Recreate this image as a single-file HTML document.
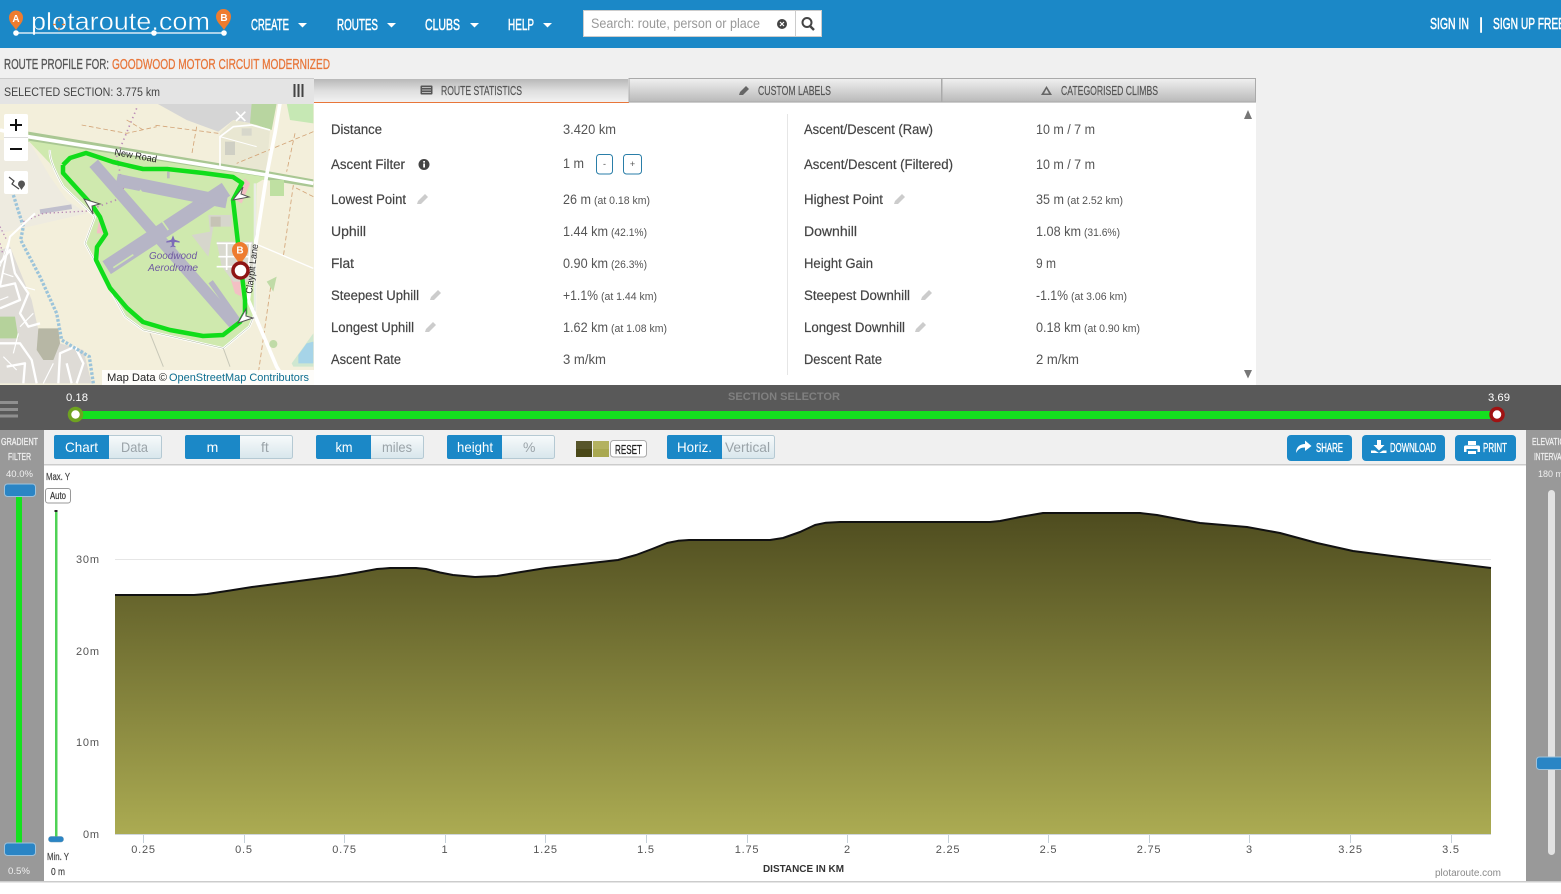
<!DOCTYPE html>
<html><head><meta charset="utf-8"><title>plotaroute.com</title>
<style>
html,body{margin:0;padding:0;background:#fff;overflow:hidden}
svg{display:block;font-family:"Liberation Sans",sans-serif}
.n{font-family:"Liberation Sans Narrow","Liberation Sans",sans-serif}
.l{font-size:13.5px;fill:#444;stroke:#444;stroke-width:.2px}
.v{font-size:13.5px;fill:#555}
.s{font-size:11px;fill:#555}
.t{font-size:14px;fill:#fff;text-anchor:middle}
.o{font-size:14px;fill:#9aa3a8}
.ax{font-size:11px;fill:#555;letter-spacing:.8px}
.xl{font-size:11px;fill:#555;letter-spacing:.8px;text-anchor:middle}
</style></head><body>
<svg width="1561" height="894" viewBox="0 0 1561 894" xmlns="http://www.w3.org/2000/svg">
<defs>
<linearGradient id="fill" x1="0" y1="513" x2="0" y2="834" gradientUnits="userSpaceOnUse"><stop offset="0" stop-color="#4e4c1f"/><stop offset="1" stop-color="#abab52"/></linearGradient>
<linearGradient id="tabg" x1="0" y1="0" x2="0" y2="1"><stop offset="0" stop-color="#b8b8b8"/><stop offset=".5" stop-color="#dedede"/><stop offset="1" stop-color="#f2f2f2"/></linearGradient>
<linearGradient id="tabh" x1="0" y1="0" x2="0" y2="1"><stop offset="0" stop-color="#f0f0f0"/><stop offset="1" stop-color="#b9b9b9"/></linearGradient>
<linearGradient id="off" x1="0" y1="0" x2="0" y2="1"><stop offset="0" stop-color="#f7fafb"/><stop offset="1" stop-color="#d8e6ec"/></linearGradient>
<clipPath id="mc"><rect x="0" y="104" width="314" height="281"/></clipPath>
<clipPath id="rc"><rect x="1526" y="430" width="35" height="451"/></clipPath>
</defs>
<rect width="1561" height="894" fill="#fff"/>

<!-- top bar -->
<rect width="1561" height="48" fill="#1b88c7"/>
<text x="31" y="30" font-size="25" fill="#fff" stroke="#1b88c7" stroke-width=".4" textLength="179" lengthAdjust="spacingAndGlyphs">plotaroute.com</text>
<path d="M16 33H224" stroke="#fff" stroke-width="1.200"/>
<circle cx="16" cy="33" r="2.800" fill="#fff"/><circle cx="154" cy="33" r="2.800" fill="#fff"/><circle cx="224" cy="33" r="2.800" fill="#fff"/>
<path d="M16 30C13 25 9 23 9 17.500A7 7 0 0 1 23 17.500C23 23 19 25 16 30Z" fill="#ee7c2f"/>
<path d="M224 30C221 25 216 22 216 16.500A7.500 7.500 0 0 1 231 16.500C231 22 227 25 224 30Z" fill="#ee7c2f"/>
<text x="16" y="22" font-size="10" font-weight="bold" fill="#fff" text-anchor="middle">A</text>
<text x="224" y="21" font-size="10" font-weight="bold" fill="#fff" text-anchor="middle">B</text>
<path d="M59 18.500V21.500M59 27.500V30.500M53 24.500H56M62 24.500H65" stroke="#ee7c2f" stroke-width="1.200"/>
<g class="n" font-size="16" fill="#fff" stroke="#fff" stroke-width=".5">
<text x="251" y="30" textLength="38" lengthAdjust="spacingAndGlyphs">CREATE</text>
<text x="337" y="30" textLength="41" lengthAdjust="spacingAndGlyphs">ROUTES</text>
<text x="425" y="30" textLength="35" lengthAdjust="spacingAndGlyphs">CLUBS</text>
<text x="508" y="30" textLength="26" lengthAdjust="spacingAndGlyphs">HELP</text>
<text x="1430" y="29" textLength="39" lengthAdjust="spacingAndGlyphs">SIGN IN</text>
<text x="1479" y="29">|</text>
<text x="1493" y="29" textLength="72" lengthAdjust="spacingAndGlyphs">SIGN UP FREE</text>
</g>
<g fill="#fff"><path d="M298 23h9l-4.500 4.500z"/><path d="M387 23h9l-4.500 4.500z"/><path d="M470 23h9l-4.500 4.500z"/><path d="M543 23h9l-4.500 4.500z"/></g>
<rect x="583.500" y="10.500" width="238" height="26" fill="#fff" stroke="#ccc"/>
<path d="M795.500 10V37" stroke="#ccc"/>
<text x="591" y="28" font-size="13.500" fill="#999" textLength="169" lengthAdjust="spacingAndGlyphs">Search: route, person or place</text>
<circle cx="782" cy="24" r="5" fill="#444"/><path d="M780 22l4 4M784 22l-4 4" stroke="#fff" stroke-width="1.200"/>
<circle cx="807" cy="22.500" r="4.500" fill="none" stroke="#444" stroke-width="2"/><path d="M810 26l4 4" stroke="#444" stroke-width="2.400"/>

<!-- title row -->
<rect y="48" width="1561" height="337" fill="#f0f0f0"/>
<g class="n" font-size="15">
<text x="4" y="69" fill="#555" stroke="#555" stroke-width=".3" textLength="105" lengthAdjust="spacingAndGlyphs">ROUTE PROFILE FOR:</text>
<text x="112" y="69" fill="#e8763a" stroke="#e8763a" stroke-width=".3" textLength="218" lengthAdjust="spacingAndGlyphs">GOODWOOD MOTOR CIRCUIT MODERNIZED</text>
</g>
<rect y="78" width="314" height="1" fill="#ccc"/>
<rect y="79" width="314" height="25" fill="#e4e4e4"/>
<text x="4" y="96" font-size="11.500" fill="#444" textLength="156" lengthAdjust="spacingAndGlyphs">SELECTED SECTION: 3.775 km</text>
<path d="M294.500 84V97M298.500 84V97M302.500 84V97" stroke="#444" stroke-width="2"/>

<!-- tabs -->
<rect x="314" y="79" width="314" height="23" fill="url(#tabg)"/>
<rect x="314" y="102" width="315" height="1" fill="#e8763a"/>
<rect x="629" y="78.500" width="312.500" height="23.500" fill="url(#tabh)" stroke="#aaa"/>
<rect x="942" y="78.500" width="313.500" height="23.500" fill="url(#tabh)" stroke="#aaa"/>
<rect x="314" y="103" width="942" height="282" fill="#fff"/>
<g class="n" font-size="13" fill="#555" stroke="#555" stroke-width=".2">
<text x="441" y="95" textLength="81" lengthAdjust="spacingAndGlyphs">ROUTE STATISTICS</text>
<text x="758" y="95" textLength="73" lengthAdjust="spacingAndGlyphs">CUSTOM LABELS</text>
<text x="1061" y="95" textLength="97" lengthAdjust="spacingAndGlyphs">CATEGORISED CLIMBS</text>
</g>
<rect x="420.500" y="85.500" width="12" height="9" rx="1" fill="#555"/><path d="M422 87.500h9M422 90h9M422 92.500h9" stroke="#ddd" stroke-width=".8"/>
<path d="M739 95l1-3 6-6 3 3-6 6z" fill="#666"/>
<path d="M1046.500 86l5.500 9h-11zM1046.500 89l-2.500 4.500h5z" fill="#666" fill-rule="evenodd"/>

<!-- stats -->
<path d="M787.500 114V375" stroke="#e6e6e6"/>
<g class="l">
<text x="331" y="134" textLength="51" lengthAdjust="spacingAndGlyphs">Distance</text>
<text x="331" y="169" textLength="74" lengthAdjust="spacingAndGlyphs">Ascent Filter</text>
<text x="331" y="204" textLength="75" lengthAdjust="spacingAndGlyphs">Lowest Point</text>
<text x="331" y="236" textLength="35" lengthAdjust="spacingAndGlyphs">Uphill</text>
<text x="331" y="268" textLength="23" lengthAdjust="spacingAndGlyphs">Flat</text>
<text x="331" y="300" textLength="88" lengthAdjust="spacingAndGlyphs">Steepest Uphill</text>
<text x="331" y="332" textLength="83" lengthAdjust="spacingAndGlyphs">Longest Uphill</text>
<text x="331" y="364" textLength="70" lengthAdjust="spacingAndGlyphs">Ascent Rate</text>
<text x="804" y="134" textLength="129" lengthAdjust="spacingAndGlyphs">Ascent/Descent (Raw)</text>
<text x="804" y="169" textLength="149" lengthAdjust="spacingAndGlyphs">Ascent/Descent (Filtered)</text>
<text x="804" y="204" textLength="79" lengthAdjust="spacingAndGlyphs">Highest Point</text>
<text x="804" y="236" textLength="53" lengthAdjust="spacingAndGlyphs">Downhill</text>
<text x="804" y="268" textLength="69" lengthAdjust="spacingAndGlyphs">Height Gain</text>
<text x="804" y="300" textLength="106" lengthAdjust="spacingAndGlyphs">Steepest Downhill</text>
<text x="804" y="332" textLength="101" lengthAdjust="spacingAndGlyphs">Longest Downhill</text>
<text x="804" y="364" textLength="78" lengthAdjust="spacingAndGlyphs">Descent Rate</text>
</g>
<g class="v">
<text x="563" y="134" textLength="53" lengthAdjust="spacingAndGlyphs">3.420 km</text>
<text x="563" y="168" textLength="21" lengthAdjust="spacingAndGlyphs">1 m</text>
<text x="563" y="204" textLength="28" lengthAdjust="spacingAndGlyphs">26 m</text>
<text x="563" y="236" textLength="45" lengthAdjust="spacingAndGlyphs">1.44 km</text>
<text x="563" y="268" textLength="45" lengthAdjust="spacingAndGlyphs">0.90 km</text>
<text x="563" y="300" textLength="35" lengthAdjust="spacingAndGlyphs">+1.1%</text>
<text x="563" y="332" textLength="45" lengthAdjust="spacingAndGlyphs">1.62 km</text>
<text x="563" y="364" textLength="43" lengthAdjust="spacingAndGlyphs">3 m/km</text>
<text x="1036" y="134" textLength="59" lengthAdjust="spacingAndGlyphs">10 m / 7 m</text>
<text x="1036" y="169" textLength="59" lengthAdjust="spacingAndGlyphs">10 m / 7 m</text>
<text x="1036" y="204" textLength="28" lengthAdjust="spacingAndGlyphs">35 m</text>
<text x="1036" y="236" textLength="45" lengthAdjust="spacingAndGlyphs">1.08 km</text>
<text x="1036" y="268" textLength="20" lengthAdjust="spacingAndGlyphs">9 m</text>
<text x="1036" y="300" textLength="32" lengthAdjust="spacingAndGlyphs">-1.1%</text>
<text x="1036" y="332" textLength="45" lengthAdjust="spacingAndGlyphs">0.18 km</text>
<text x="1036" y="364" textLength="43" lengthAdjust="spacingAndGlyphs">2 m/km</text>
</g>
<g class="s">
<text x="594" y="204" textLength="56" lengthAdjust="spacingAndGlyphs">(at 0.18 km)</text>
<text x="611" y="236" textLength="36" lengthAdjust="spacingAndGlyphs">(42.1%)</text>
<text x="611" y="268" textLength="36" lengthAdjust="spacingAndGlyphs">(26.3%)</text>
<text x="601" y="300" textLength="56" lengthAdjust="spacingAndGlyphs">(at 1.44 km)</text>
<text x="611" y="332" textLength="56" lengthAdjust="spacingAndGlyphs">(at 1.08 km)</text>
<text x="1067" y="204" textLength="56" lengthAdjust="spacingAndGlyphs">(at 2.52 km)</text>
<text x="1084" y="236" textLength="36" lengthAdjust="spacingAndGlyphs">(31.6%)</text>
<text x="1071" y="300" textLength="56" lengthAdjust="spacingAndGlyphs">(at 3.06 km)</text>
<text x="1084" y="332" textLength="56" lengthAdjust="spacingAndGlyphs">(at 0.90 km)</text>
</g>
<circle cx="424" cy="164.500" r="5.500" fill="#444"/><rect x="423.200" y="163.500" width="1.800" height="4" fill="#fff"/><rect x="423.200" y="161" width="1.800" height="1.600" fill="#fff"/>
<rect x="596.500" y="154.500" width="16" height="19.500" rx="3" fill="#fff" stroke="#2a7ea8"/><rect x="623.500" y="154.500" width="18" height="19.500" rx="3" fill="#fff" stroke="#2a7ea8"/>
<text x="604.500" y="167" font-size="9" fill="#555" text-anchor="middle">-</text><text x="632.500" y="167" font-size="9" fill="#555" text-anchor="middle">+</text>
<g fill="#ccc">
<path d="M417 204l1-3 7-7 3 3-7 7z"/><path d="M894 204l1-3 7-7 3 3-7 7z"/>
<path d="M430 300l1-3 7-7 3 3-7 7z"/><path d="M921 300l1-3 7-7 3 3-7 7z"/>
<path d="M425 332l1-3 7-7 3 3-7 7z"/><path d="M915 332l1-3 7-7 3 3-7 7z"/>
</g>
<path d="M1244 119l4-9 4 9zM1244 370l4 8.500 4-8.500z" fill="#777"/>

<!-- map -->
<g clip-path="url(#mc)">
<rect y="104" width="314" height="281" fill="#f3efdb"/>
<g transform="translate(0,100) scale(.33333)">
<path d="M0 120H85L150 230L200 300L260 340L0 400Z" fill="#eeebe0"/>
<path d="M470 10H755V70L700 60L655 95L560 60Z" fill="#d5d5d5"/>
<path d="M755 10H830L815 90L750 70Z" fill="#b8d5a0"/><path d="M860 10H940V70L870 60Z" fill="#c6e8b4"/>
<path d="M660 100L700 60L770 75L810 90L800 210L700 205L660 190Z" fill="#e9e7d2"/>
<path d="M85 95L800 213L940 238V262L800 240L85 125Z" fill="#a9c793"/>
<path d="M85 122L800 232L770 250L765 640L748 680L670 745L430 690L375 650L255 430L285 350L190 260L150 190Z" fill="#cfe9ae"/>
<path d="M150 150Q145 180 190 260L285 350L255 430L375 650L430 690L670 745L748 680L765 640V250" fill="none" stroke="#fff" stroke-width="7"/>
<path d="M150 150Q145 180 190 260L285 350L255 430L375 650L430 690L670 745L748 680L765 640V250" fill="none" stroke="#a9b49a" stroke-width="1.500"/>
<path d="M0 450L30 440L95 600L115 690L175 690L180 730L250 750L275 850H0Z" fill="#dedbd6"/>
<path d="M115 685H175L180 730L160 780L130 780L110 750Z" fill="#b7b7a5"/>
<path d="M0 650H45L55 715H0Z" fill="#b5d29b"/>
<g fill="none" stroke="#fff" stroke-width="7" stroke-linejoin="round">
<path d="M0 490L30 450L45 520L85 580L60 640L85 680L120 670"/>
<path d="M0 560L45 550L60 600L0 625"/>
<path d="M0 730L60 730L95 780L110 850"/>
<path d="M20 800L75 790L70 850"/>
<path d="M175 850L180 760L225 740L250 790L230 850"/>
<path d="M200 790L215 850"/>
</g>
<g fill="none" stroke="#fff" stroke-width="3.500">
<path d="M10 520L40 530M70 560L105 570M60 680L100 640M10 770L50 810M130 850L160 790"/>
<path d="M0 600L25 590M40 760L55 700"/>
</g>
<path d="M40 285L70 380L62 420L120 530L170 640L185 720L268 770L280 850" fill="none" stroke="#9cc4da" stroke-width="10" stroke-dasharray="8 5"/>
<path d="M120 335L215 320" fill="none" stroke="#c0bfcd" stroke-width="14"/>
<path d="M70 365L130 340L265 333" fill="none" stroke="#b98ab5" stroke-width="4" stroke-dasharray="4 8"/>
<path d="M410 25L350 170L375 290L280 325" fill="none" stroke="#b98ab5" stroke-width="5" stroke-dasharray="4 10"/>
<path d="M0 380L20 420M0 430L8 460" fill="none" stroke="#b98ab5" stroke-width="4" stroke-dasharray="4 8"/>
<g fill="none" stroke="#d3a477" stroke-width="2.500" stroke-dasharray="14 8">
<path d="M245 75L380 100L470 80M380 60L430 90M590 80L575 165M655 100L460 75"/>
<path d="M885 100L860 215M940 95L710 190"/>
<path d="M880 255L850 470M815 540L775 820M940 290L880 260"/>
</g>
<path d="M0 90L85 110L800 225L940 250" fill="none" stroke="#fff" stroke-width="11"/>
<path d="M840 10L825 100L800 225L760 480L745 600L830 800L860 850" fill="none" stroke="#fff" stroke-width="11"/>
<path d="M775 435L940 505" fill="none" stroke="#fff" stroke-width="4"/>
<path d="M0 560L30 410L105 340" fill="none" stroke="#fff" stroke-width="6"/>
<path d="M0 500L30 410" fill="none" stroke="#fff" stroke-width="3"/>
<path d="M660 200V110L700 80L755 75L810 90" fill="none" stroke="#fff" stroke-width="5"/>
<path d="M660 110L770 140" fill="none" stroke="#fff" stroke-width="3"/>
<rect x="675" y="125" width="30" height="40" fill="#cfcfc4"/><rect x="725" y="85" width="30" height="22" fill="#d7d7cb"/>
<path d="M708 35l28 28M736 35l-28 28" stroke="#fff" stroke-width="5"/>
<path d="M810 240h42v48h-42z" fill="#bfe0a2"/>
<path d="M800 545L830 530L820 575ZM820 720a12 12 0 1 0 .1 0Z" fill="#c0dba7"/>
<path d="M875 790L940 700V800H880Z" fill="#cfe7d0"/>
<path d="M895 765L920 730L940 725V790H895Z" fill="#a6d4e8"/>
<path d="M450 700L490 800M670 745L690 800" fill="none" stroke="#c8c8b8" stroke-width="3"/>
<path d="M735 235L750 250L725 310L708 300ZM290 400L300 345L312 400ZM285 440L295 420L300 470ZM690 530L720 545L725 590L705 580Z" fill="#f3c0c4"/>
<path d="M625 345H695V380H640L625 470L575 405L630 395Z" fill="#d6d6cc"/>
<path d="M650 425H760V545H700L665 500Z" fill="#d9d9cf"/>
<path d="M650 430H755M655 470H750M650 500H720M680 430V510M720 430V500M750 430L745 520" fill="none" stroke="#fff" stroke-width="5"/>
<rect x="632" y="350" width="30" height="30" fill="#c6c3b5"/>
<path d="M505 215v20" stroke="#bbb" stroke-width="8"/>
<g fill="none" stroke="#b6b5c6" stroke-linecap="butt">
<path d="M281 190L702 672" stroke-width="34"/>
<path d="M320 503L678 268" stroke-width="46"/>
<path d="M350 240L680 306" stroke-width="38"/>
<path d="M632 545L722 672" stroke-width="16"/>
</g>
<path d="M340 503L400 464" stroke="#cfe9ae" stroke-width="5"/>
<path d="M420 270L505 390M430 290L560 305" fill="none" stroke="#cfe9ae" stroke-width="5"/>
<path d="M519 406l5 13 15 5v4l-15-2-2 10 5 4v2l-8-2-8 2v-2l5-4-2-10-15 2v-4l15-5z" fill="#7d6cb8"/>
</g>
<text x="173" y="259" font-size="10" font-style="italic" fill="#6f5aa0" text-anchor="middle" textLength="48" lengthAdjust="spacingAndGlyphs">Goodwood</text>
<text x="173" y="271" font-size="10" font-style="italic" fill="#6f5aa0" text-anchor="middle" textLength="50" lengthAdjust="spacingAndGlyphs">Aerodrome</text>
<text x="114" y="155" font-size="9.500" fill="#222" transform="rotate(10 114 155)" textLength="43" lengthAdjust="spacingAndGlyphs">New Road</text>
<text x="252" y="294" font-size="9.500" fill="#222" transform="rotate(-83 252 294)" textLength="50" lengthAdjust="spacingAndGlyphs">Claypit Lane</text>
<polyline points="63,165 70,158 86,153 113,162 143,169 167,169 203,173 233,177 242,183 233,200 238,243 245,300 245,313 240,322 223,335 203,336 170,330 143,322 127,308 110,288 96,260 97,247 106,234 100,217 92,205 63,173 63,165" fill="none" stroke="#10dd1a" stroke-width="4.500" stroke-linejoin="round"/>
<path d="M84 199L100 204L92 206L93 214Z" fill="#fff" stroke="#555" stroke-width="1"/>
<path d="M233 200L249 197L241 194L243 187Z" fill="#fff" stroke="#555" stroke-width="1"/>
<path d="M238 323L253 318L246 316L246 309Z" fill="#fff" stroke="#555" stroke-width="1"/>
<path d="M240 265C237 259 232 256 232 250A8 8 0 0 1 248 250C248 256 243 259 240 265Z" fill="#ee7c2f"/>
<text x="240" y="253.500" font-size="10" font-weight="bold" fill="#fff" text-anchor="middle">B</text>
<circle cx="240.500" cy="270.500" r="7.500" fill="#fff" stroke="#8f1414" stroke-width="3.500"/>
<rect x="4" y="114" width="24" height="47" rx="2" fill="#fff"/><path d="M4 137.500H28" stroke="#ddd"/>
<path d="M16 119V131M10 125H22M10 149H22" stroke="#111" stroke-width="2"/>
<rect x="4" y="171" width="24" height="23" rx="2" fill="#fff"/>
<path d="M9 177L14 181L12 184L19 189" fill="none" stroke="#444" stroke-width="1.200"/>
<path d="M21.500 190C20 187 18 186 18 184A3.500 3.500 0 0 1 25 184C25 186 23 187 21.500 190Z" fill="#555"/>
<rect x="102" y="370" width="212" height="15" fill="#fff" fill-opacity=".85"/>
<text x="107" y="381" font-size="11" fill="#222" textLength="60" lengthAdjust="spacingAndGlyphs">Map Data ©</text>
<text x="169" y="381" font-size="11" fill="#0d6d8f" textLength="140" lengthAdjust="spacingAndGlyphs">OpenStreetMap Contributors</text>
</g>

<!-- section selector -->
<rect y="385" width="1561" height="45" fill="#595959"/>
<path d="M0 402.500H18M0 409.500H18M0 416H18" stroke="#8f8f8f" stroke-width="3"/>
<text x="784" y="400" font-size="11" font-weight="bold" fill="#808080" text-anchor="middle" textLength="112" lengthAdjust="spacingAndGlyphs">SECTION SELECTOR</text>
<text x="66" y="401" font-size="11" fill="#fff" textLength="22" lengthAdjust="spacingAndGlyphs">0.18</text>
<text x="1488" y="401" font-size="11" fill="#fff" textLength="22" lengthAdjust="spacingAndGlyphs">3.69</text>
<rect x="80" y="411" width="1417" height="8" fill="#15e01f"/>
<circle cx="75.500" cy="414.500" r="6" fill="#fff" stroke="#6ea320" stroke-width="3.500"/>
<circle cx="1497" cy="414.500" r="6" fill="#fff" stroke="#a01212" stroke-width="3.500"/>

<!-- toolbar -->
<rect y="430" width="1561" height="34" fill="#f0f0f0"/>
<rect y="464" width="1561" height="1.500" fill="#ccc"/>
<g stroke="#b5c9d3" fill="url(#off)">
<rect x="100" y="435.500" width="61.500" height="23" rx="2"/>
<rect x="230" y="435.500" width="62.500" height="23" rx="2"/>
<rect x="361" y="435.500" width="62.500" height="23" rx="2"/>
<rect x="492" y="435.500" width="62.500" height="23" rx="2"/>
<rect x="712" y="435.500" width="62.500" height="23" rx="2"/>
</g>
<g fill="#1b88c7">
<path d="M56 435H109V459H56a2 2 0 0 1-2-2V437a2 2 0 0 1 2-2Z"/>
<path d="M187 435H240V459H187a2 2 0 0 1-2-2V437a2 2 0 0 1 2-2Z"/>
<path d="M318 435H371V459H318a2 2 0 0 1-2-2V437a2 2 0 0 1 2-2Z"/>
<path d="M449 435H502V459H449a2 2 0 0 1-2-2V437a2 2 0 0 1 2-2Z"/>
<path d="M669 435H722V459H669a2 2 0 0 1-2-2V437a2 2 0 0 1 2-2Z"/>
</g>
<text class="t" x="81.500" y="452" textLength="33" lengthAdjust="spacingAndGlyphs">Chart</text>
<text class="o" x="121" y="452" textLength="27" lengthAdjust="spacingAndGlyphs">Data</text>
<text class="t" x="212.500" y="452">m</text>
<text class="o" x="261" y="452">ft</text>
<text class="t" x="344" y="452" textLength="17" lengthAdjust="spacingAndGlyphs">km</text>
<text class="o" x="382" y="452" textLength="30" lengthAdjust="spacingAndGlyphs">miles</text>
<text class="t" x="475" y="452" textLength="36" lengthAdjust="spacingAndGlyphs">height</text>
<text class="o" x="523" y="452">%</text>
<text class="t" x="694.500" y="452" textLength="35" lengthAdjust="spacingAndGlyphs">Horiz.</text>
<text class="o" x="725" y="452" textLength="45" lengthAdjust="spacingAndGlyphs">Vertical</text>
<rect x="576" y="441" width="16" height="16" fill="#57552a"/><rect x="576" y="449" width="16" height="8" fill="#4a4818"/>
<rect x="593" y="441" width="16" height="16" fill="#b3b15f"/><rect x="593" y="449" width="16" height="8" fill="#a9a850"/>
<rect x="610.500" y="440.500" width="36" height="16.500" rx="3" fill="#fff" stroke="#aaa"/>
<text class="n" x="615" y="454" font-size="13" fill="#222" stroke="#222" stroke-width=".25" textLength="27" lengthAdjust="spacingAndGlyphs">RESET</text>
<rect x="1287" y="435" width="65" height="26" rx="4" fill="#1b88c7"/>
<rect x="1362" y="435" width="83" height="26" rx="4" fill="#1b88c7"/>
<rect x="1455" y="435" width="61" height="26" rx="4" fill="#1b88c7"/>
<g class="n" font-size="13" fill="#fff" stroke="#fff" stroke-width=".35">
<text x="1316" y="452" textLength="27" lengthAdjust="spacingAndGlyphs">SHARE</text>
<text x="1390" y="452" textLength="46" lengthAdjust="spacingAndGlyphs">DOWNLOAD</text>
<text x="1483" y="452" textLength="24" lengthAdjust="spacingAndGlyphs">PRINT</text>
</g>
<path d="M1296 453C1296 447 1300 444 1305 444V440.500L1311.500 446L1305 451V447.500C1301 447.500 1298 449 1296 453Z" fill="#fff"/>
<path d="M1377 440h4v5h3.500l-5.500 5.500-5.500-5.500h3.500zM1371 450.500h4l4 2.500 4-2.500h3.500v2.500h-15.500z" fill="#fff"/>
<path d="M1468 441h8v4h-8zM1465.500 445.500h13a1.500 1.500 0 0 1 1.500 1.500v5h-2.500v-3h-11v3H1464v-5a1.500 1.500 0 0 1 1.500-1.500zM1468 451h8v3h-8z" fill="#fff"/>

<!-- left panel -->
<rect y="430" width="44" height="451" fill="#999"/>
<g class="n" font-size="10.500" fill="#f0f0f0" stroke="#f0f0f0" stroke-width=".3">
<text x="1" y="445" textLength="37" lengthAdjust="spacingAndGlyphs">GRADIENT</text>
<text x="8" y="460" textLength="23" lengthAdjust="spacingAndGlyphs">FILTER</text>
</g>
<text x="6" y="477" font-size="9.500" fill="#f0f0f0" textLength="27" lengthAdjust="spacingAndGlyphs">40.0%</text>
<text x="8" y="874" font-size="9.500" fill="#f0f0f0" textLength="22" lengthAdjust="spacingAndGlyphs">0.5%</text>
<rect x="16" y="496" width="6" height="347" fill="#15e01f"/>
<rect x="4.500" y="484" width="31" height="12.500" rx="3" fill="#2a85c5" stroke="#9ec2dc"/>
<rect x="4.500" y="843" width="31" height="12.500" rx="3" fill="#2a85c5" stroke="#9ec2dc"/>

<!-- y slider column -->
<g class="n" font-size="10" fill="#444" stroke="#444" stroke-width=".2">
<text x="46" y="480" textLength="24" lengthAdjust="spacingAndGlyphs">Max. Y</text>
<text x="47" y="860" textLength="22" lengthAdjust="spacingAndGlyphs">Min. Y</text>
<text x="51" y="875" textLength="14" lengthAdjust="spacingAndGlyphs">0 m</text>
</g>
<rect x="45.500" y="488.500" width="25" height="14.500" rx="2.500" fill="#fff" stroke="#999"/>
<text class="n" x="50" y="499" font-size="10" fill="#333" stroke="#333" stroke-width=".2" textLength="16" lengthAdjust="spacingAndGlyphs">Auto</text>
<rect x="54.500" y="510" width="3" height="2" fill="#222"/>
<rect x="55" y="512" width="2.500" height="325" fill="#4fd255"/>
<rect x="48.500" y="836.500" width="15" height="5.500" rx="2.500" fill="#2a85c5" stroke="#5f8fb0" stroke-width=".5"/>

<!-- chart -->
<path d="M115 559.500H1491" stroke="#e6e6e6"/>
<polygon fill="url(#fill)" points="115,834 115,595 194,595 207,594 230,590.500 252,587 295,581.500 337,576 358,572.500 377,569 390,568 404,568 416,568 426,569 440,572.500 453,575 475,577 497,576 521,572 546,568 582,564 618,560 636,555 652,549 667,543 678,540.800 689,540 770,540 783,538 800,532 815,525 826,522.700 840,522 990,522 1000,521 1020,517 1043,513 1140,513 1157,515 1178,519 1200,523 1247,527 1280,533 1317,543 1353,551 1400,557 1491,568 1491,834"/>
<polyline fill="none" stroke="#111" stroke-width="2" stroke-linejoin="round" points="115,595 194,595 207,594 230,590.500 252,587 295,581.500 337,576 358,572.500 377,569 390,568 404,568 416,568 426,569 440,572.500 453,575 475,577 497,576 521,572 546,568 582,564 618,560 636,555 652,549 667,543 678,540.800 689,540 770,540 783,538 800,532 815,525 826,522.700 840,522 990,522 1000,521 1020,517 1043,513 1140,513 1157,515 1178,519 1200,523 1247,527 1280,533 1317,543 1353,551 1400,557 1491,568"/>
<path d="M115 834.500H1491" stroke="#cfd6dc"/>
<path d="M143.500 835V843M244.500 835V843M344.500 835V843M445.500 835V843M545.500 835V843M646.500 835V843M747.500 835V843M847.500 835V843M948.500 835V843M1048.500 835V843M1149.500 835V843M1249.500 835V843M1350.500 835V843M1451.500 835V843" stroke="#c5d0d8"/>
<text class="ax" x="76" y="563">30m</text><text class="ax" x="76" y="655">20m</text><text class="ax" x="76" y="746">10m</text><text class="ax" x="83" y="838">0m</text>
<text class="xl" x="143.500" y="853">0.25</text><text class="xl" x="244" y="853">0.5</text><text class="xl" x="344.500" y="853">0.75</text><text class="xl" x="445" y="853">1</text><text class="xl" x="545.500" y="853">1.25</text><text class="xl" x="646" y="853">1.5</text><text class="xl" x="747" y="853">1.75</text><text class="xl" x="847.500" y="853">2</text><text class="xl" x="948" y="853">2.25</text><text class="xl" x="1048.500" y="853">2.5</text><text class="xl" x="1149" y="853">2.75</text><text class="xl" x="1249.500" y="853">3</text><text class="xl" x="1350.500" y="853">3.25</text><text class="xl" x="1451" y="853">3.5</text>
<text x="763" y="872" font-size="10.500" font-weight="bold" fill="#333" textLength="81" lengthAdjust="spacingAndGlyphs">DISTANCE IN KM</text>
<text x="1435" y="876" font-size="10" fill="#8a8a8a" textLength="66" lengthAdjust="spacingAndGlyphs">plotaroute.com</text>

<!-- right panel -->
<rect x="1526" y="430" width="35" height="451" fill="#999"/>
<g clip-path="url(#rc)">
<g class="n" font-size="10.500" fill="#f0f0f0" stroke="#f0f0f0" stroke-width=".3">
<text x="1532" y="445" textLength="38" lengthAdjust="spacingAndGlyphs">ELEVATION</text>
<text x="1534" y="460" textLength="31" lengthAdjust="spacingAndGlyphs">INTERVAL</text>
</g>
<text x="1538" y="477" font-size="9.500" fill="#f0f0f0" textLength="25" lengthAdjust="spacingAndGlyphs">180 m</text>
<rect x="1548" y="490" width="7" height="365" rx="3.500" fill="#e2e2e2"/>
<rect x="1536.500" y="757" width="31" height="12.500" rx="3" fill="#2a85c5" stroke="#9ec2dc"/>
</g>
<rect y="881" width="1561" height="1.500" fill="#ccc"/>
</svg>
</body></html>
